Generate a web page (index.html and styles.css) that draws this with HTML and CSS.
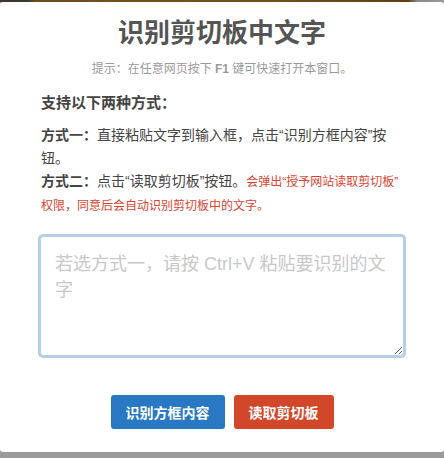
FILE: index.html
```html
<!DOCTYPE html>
<html lang="zh-CN">
<head>
    <meta charset="UTF-8">
    <meta name="viewport" content="width=device-width, initial-scale=1.0">
    <title>识别剪切板中文字</title>
    <link rel="stylesheet" href="styles.css">
</head>
<body>
    <div class="topbar"></div>
    <div class="card">
        <h1 class="title">识别剪切板中文字</h1>
        <p class="tip">提示：在任意网页按下 <b>F1</b> 键可快速打开本窗口。</p>
        <h2 class="subtitle">支持以下两种方式：</h2>
        <div class="methods">
            <p><b>方式一：</b>直接粘贴文字到输入框，点击“识别方框内容”按钮。</p>
            <p><b>方式二：</b>点击“读取剪切板”按钮。<span class="warn">会弹出“授予网站读取剪切板”权限，同意后会自动识别剪切板中的文字。</span></p>
        </div>
        <textarea class="input" placeholder="若选方式一，请按 Ctrl+V 粘贴要识别的文字"></textarea>
        <div class="actions">
            <button class="btn btn-blue">识别方框内容</button>
            <button class="btn btn-red">读取剪切板</button>
        </div>
    </div>
</body>
</html>
```

FILE: styles.css
```css
body {
    margin: 0;
    background: #9a9a9a;
    font-family: "Liberation Sans", "Noto Sans CJK SC", sans-serif;
    color: #444;
}
.topbar {
    height: 2px;
    background: linear-gradient(to right, #3a3630 0%, #3a3630 6%, #6b4a1e 8%, #7a5220 50%, #5e4016 92%, #8a8a8a 94%, #9a9a9a 100%);
}
.card {
    background: #fff;
    height: 450px;
    box-sizing: border-box;
    border-radius: 3px;
    padding: 13px 38px 0;
}
.title {
    margin: 0;
    text-align: center;
    font-size: 26px;
    line-height: 36px;
    font-weight: bold;
    color: #555;
}
.tip {
    margin: 9px 0 0;
    text-align: center;
    font-size: 12px;
    line-height: 18px;
    color: #9a9a9a;
}
.subtitle {
    margin: 14px 0 0 3px;
    font-size: 15px;
    line-height: 22px;
    font-weight: bold;
    color: #444;
}
.methods {
    margin: 10px 0 0 3px;
    padding-right: 7px;
    font-size: 14px;
    line-height: 23px;
    color: #444;
}
.methods p {
    margin: 0;
}
.warn {
    font-size: 12px;
    color: #d9442f;
}
.input {
    display: block;
    margin-top: 16px;
    width: 368px;
    height: 124px;
    box-sizing: border-box;
    border: 3px solid #b5cfe6;
    border-radius: 5px;
    padding: 14px 14px;
    font-family: "Liberation Sans", "Noto Sans CJK SC", sans-serif;
    font-size: 18px;
    line-height: 26px;
    color: #444;
    outline: none;
}
.input::placeholder {
    color: #c8c8c8;
}
.actions {
    display: flex;
    justify-content: center;
    gap: 9px;
    margin-top: 37px;
}
.btn {
    height: 34px;
    padding: 0 15px;
    border: none;
    border-radius: 3px;
    font-family: "Liberation Sans", "Noto Sans CJK SC", sans-serif;
    font-size: 14px;
    font-weight: bold;
    color: #fff;
    cursor: pointer;
}
.btn-blue {
    background: #2878c4;
}
.btn-red {
    background: #d24729;
}
```
